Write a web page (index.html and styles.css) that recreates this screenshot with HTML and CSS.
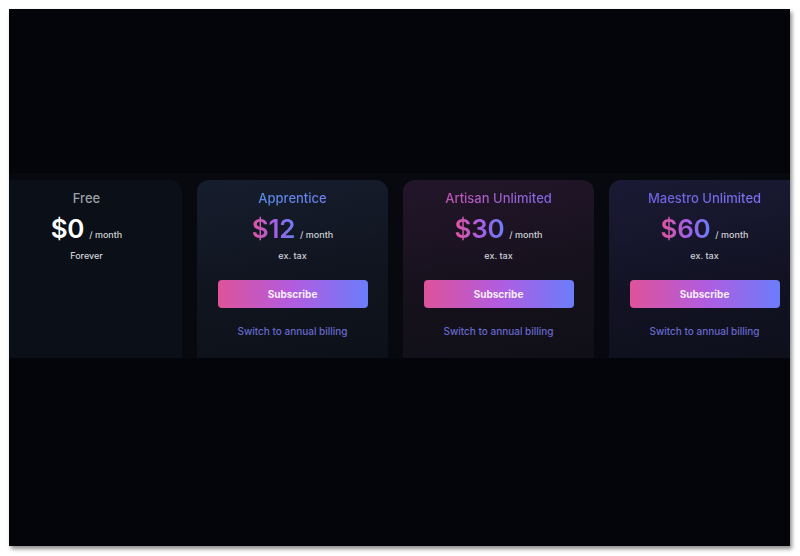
FILE: index.html
```html
<!DOCTYPE html>
<html>
<head>
<meta charset="utf-8">
<link rel="stylesheet" href="styles.css">
</head>
<body>
<div class="frame">
  <div class="top"></div>
  <div class="strip">
    <div class="cards">
      <div class="card card-free">
        <div class="title t-free">Free</div>
        <div class="price"><span class="amount a-free">$0</span><span class="per">/ month</span></div>
        <div class="note">Forever</div>
      </div>
      <div class="card card-app">
        <div class="title t-app">Apprentice</div>
        <div class="price"><span class="amount a-grad">$12</span><span class="per">/ month</span></div>
        <div class="note">ex. tax</div>
        <button class="btn">Subscribe</button>
        <div class="link">Switch to annual billing</div>
      </div>
      <div class="card card-art">
        <div class="title t-art">Artisan Unlimited</div>
        <div class="price"><span class="amount a-grad">$30</span><span class="per">/ month</span></div>
        <div class="note">ex. tax</div>
        <button class="btn">Subscribe</button>
        <div class="link">Switch to annual billing</div>
      </div>
      <div class="card card-mae">
        <div class="title t-mae">Maestro Unlimited</div>
        <div class="price"><span class="amount a-grad">$60</span><span class="per">/ month</span></div>
        <div class="note">ex. tax</div>
        <button class="btn">Subscribe</button>
        <div class="link">Switch to annual billing</div>
      </div>
    </div>
  </div>
</div>
</body>
</html>
```
FILE: styles.css
```css
html, body {
  margin: 0;
  padding: 0;
  background: #ffffff;
}
body {
  width: 800px;
  height: 556px;
  overflow: hidden;
  font-family: Inter, "Noto Sans", sans-serif;
}
.frame {
  margin: 9px 0 0 9px;
  width: 781px;
  height: 537px;
  background: #04050a;
  box-shadow: 2px 3px 4px rgba(0, 0, 0, 0.45);
  overflow: hidden;
}
.top {
  height: 164px;
}
.strip {
  height: 185px;
  background: #08090e;
  overflow: hidden;
}
.cards {
  display: flex;
  gap: 15px;
  margin-left: -18px;
  padding-top: 7px;
}
.card {
  flex: 0 0 191px;
  height: 220px;
  border-radius: 12px;
  display: flex;
  flex-direction: column;
  align-items: center;
  padding-top: 10px;
  box-sizing: border-box;
}
.card-free {
  background: #0b0f17;
}
.card-app {
  background: linear-gradient(170deg, #161d2d 0%, #0f141e 50%, #0b0f16 100%);
}
.card-art {
  background: linear-gradient(170deg, #23152a 0%, #15111c 50%, #0d0e15 100%);
}
.card-mae {
  background: linear-gradient(170deg, #1b1a35 0%, #121223 50%, #0c0e17 100%);
}
.title {
  font-size: 13px;
  line-height: 16px;
  font-weight: 500;
}
.t-free { color: #9aa0a8; }
.t-app {
  background: linear-gradient(90deg, #5a8ae6, #6e80ee);
  -webkit-background-clip: text;
  background-clip: text;
  color: transparent;
}
.t-art {
  background: linear-gradient(90deg, #c455b2, #7c68e2);
  -webkit-background-clip: text;
  background-clip: text;
  color: transparent;
}
.t-mae {
  background: linear-gradient(90deg, #6e62de, #7b70ee);
  -webkit-background-clip: text;
  background-clip: text;
  color: transparent;
}
.price {
  margin-top: 7px;
  display: flex;
  align-items: baseline;
  height: 32px;
  line-height: 32px;
}
.amount {
  font-size: 26px;
  font-weight: 600;
  letter-spacing: -0.3px;
}
.a-free { color: #ffffff; }
.a-grad {
  background: linear-gradient(90deg, #e1559c 0%, #a25fe6 55%, #6a7ef4 100%);
  -webkit-background-clip: text;
  background-clip: text;
  color: transparent;
}
.per {
  font-size: 9px;
  color: #d0d3d8;
  margin-left: 5px;
  font-weight: 500;
}
.note {
  margin-top: 5px;
  font-size: 9px;
  line-height: 12px;
  color: #cfd2d7;
  font-weight: 500;
}
.btn {
  margin-top: 18px;
  width: 150px;
  height: 28px;
  border: none;
  border-radius: 4px;
  background: linear-gradient(90deg, #de5399 0%, #b25ce0 50%, #6b7dfb 100%);
  color: #f6eefa;
  font-family: Inter, "Noto Sans", sans-serif;
  font-size: 10px;
  font-weight: 700;
  padding: 0;
}
.link {
  margin-top: 16px;
  font-size: 10px;
  line-height: 14px;
  color: #6768cc;
  font-weight: 500;
}
```
